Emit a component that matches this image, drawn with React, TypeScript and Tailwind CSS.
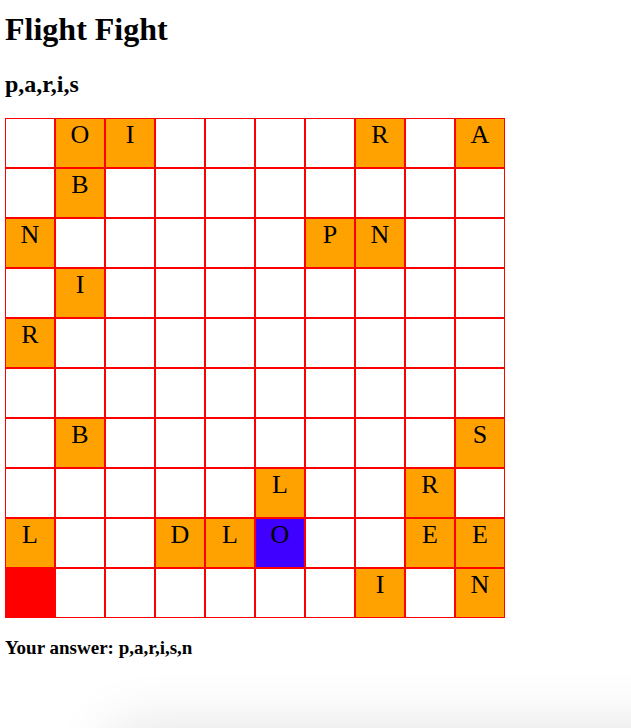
const rows: string[] = [
  ".OI....R.A",
  ".B........",
  "N.....PN..",
  ".I........",
  "R.........",
  "..........",
  ".B.......S",
  ".....L..R.",
  "L..DLO..EE",
  ".......I.N",
];

function cellColor(letter: string, row: number, col: number): string {
  if (row === 9 && col === 0) return "bg-[#ff0000]";
  if (row === 8 && col === 5) return "bg-[#4000ff]";
  return letter === "." ? "bg-white" : "bg-[#ffa200]";
}

export default function App() {
  return (
    <main className="relative min-h-screen bg-white px-[5px] pt-[11px] font-['Liberation_Serif',serif] text-black">
      <h1 className="text-[32px] leading-[37px] font-bold">Flight Fight</h1>
      <h2 className="mt-[23px] text-[24px] leading-[27px] font-bold">p,a,r,i,s</h2>
      <div className="mt-5 grid w-[500px] grid-cols-10">
        {rows.map((row, r) =>
          row.split("").map((letter, c) => (
            <div
              key={`${r}-${c}`}
              className={`h-[50px] border border-[#ff0000] text-center text-[26px] leading-[32px] ${cellColor(letter, r, c)}`}
            >
              {letter === "." ? "" : letter}
            </div>
          )),
        )}
      </div>
      <h3 className="mt-5 text-[19px] leading-[19px] font-bold">Your answer: p,a,r,i,s,n</h3>
      {/* Soft shadow rising from the bottom edge of the page */}
      <div aria-hidden="true" className="pointer-events-none absolute inset-x-0 bottom-0 h-20 overflow-hidden">
        <div className="absolute top-full -right-20 left-[112px] h-40 shadow-[0_0_60px_rgba(0,0,0,0.12)]" />
      </div>
    </main>
  );
}
